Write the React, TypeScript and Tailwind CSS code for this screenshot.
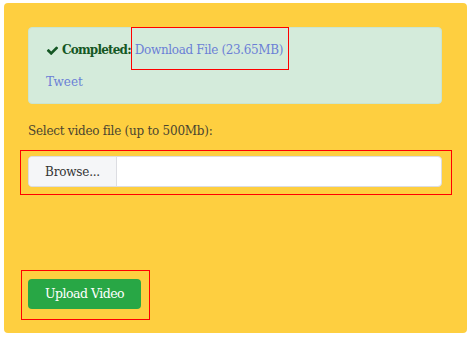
export default function App() {
  return (
    <div className="w-[471px] h-[337px] bg-white font-['DejaVu_Serif',serif] text-[12px]">
      <div className="ml-1 mt-[3px] w-[463px] h-[330px] rounded bg-[#fecf40] px-6 pt-6 pb-6 flex flex-col">
        {/* Alert */}
        <div className="w-[414px] h-[77px] rounded-sm bg-[#d4ebdb] border border-[#c9e5d1] px-[17px] pt-[13px]">
          <div className="flex items-center h-[18px]">
            <svg viewBox="0 0 1792 1792" className="w-[13px] h-[13px] mr-[3px] fill-[#155724]">
              <path d="M1671 566q0 40-28 68l-724 724-136 136q-28 28-68 28t-68-28l-136-136-362-362q-28-28-28-68t28-68l136-136q28-28 68-28t68 28l294 295 656-657q28-28 68-28t68 28l136 136q28 28 28 68z" />
            </svg>
            <span className="font-bold text-[#155724] tracking-[-0.8px]">Completed:</span>
            <span className="relative ml-[4px] text-[#6b7fd6] tracking-[-0.35px]">
              Download File (23.65MB)
              <span className="absolute -left-[4px] -right-[6px] -top-[14px] -bottom-[11px] border border-[#ff0000]" />
            </span>
          </div>
          <div className="mt-[14px] text-[#6b7fd6]">Tweet</div>
        </div>

        {/* File input */}
        <div className="mt-[18px] text-[#4a4530] tracking-[-0.25px]">Select video file (up to 500Mb):</div>
        <div className="relative mt-[16px] w-[414px] h-[31px] flex rounded border border-[#dcdde2] bg-white">
          <div className="w-[88px] flex items-center justify-center bg-[#f5f6f8] border-r border-[#dcdde2] rounded-l text-[#333] tracking-[-0.2px]">
            Browse...
          </div>
          <div className="flex-1" />
          <span className="absolute -left-[9px] -right-[11px] -top-[7px] -bottom-[9px] border border-[#ff0000]" />
        </div>

        <div className="flex-1" />

        {/* Upload */}
        <div className="relative self-start">
          <button className="w-[113px] h-[30px] rounded bg-[#28a745] text-white text-[12.5px] tracking-[-0.5px]">
            Upload Video
          </button>
          <span className="absolute -left-[7px] -right-[9px] -top-[9px] -bottom-[11px] border border-[#ff0000]" />
        </div>
      </div>
    </div>
  );
}
